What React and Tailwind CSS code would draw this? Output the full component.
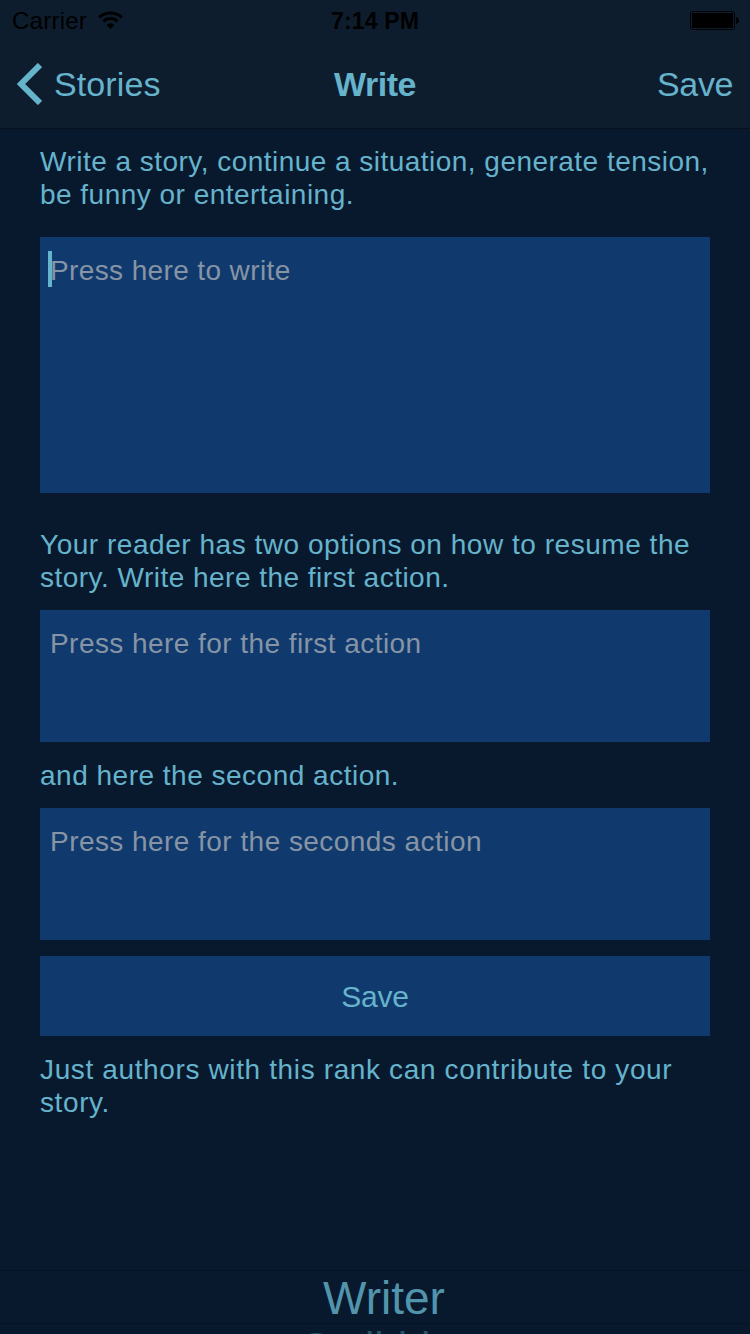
const copy = "w-max whitespace-nowrap text-[28px] leading-[33px]";

function Field({ text, height, spacing, cursor }) {
  return (
    <div className={`relative flex items-start bg-[#103a6d] pt-[17px] pl-[10px] ${height}`}>
      <div className={`${copy} ${spacing} text-[#8694a5]`}>{text}</div>
      {cursor && <div className="absolute top-[14px] left-2 h-9 w-1 bg-[#66b3cc]" />}
    </div>
  );
}

export default function App() {
  return (
    <div className="flex h-[1334px] w-[750px] flex-col overflow-hidden bg-[#08192e] font-['Liberation_Sans',Arial,sans-serif] text-[#66b3cc]">
      <header className="flex h-[129px] shrink-0 flex-col border-b border-[#06101e] bg-[#0e1d2e]">
        <div className="grid h-10 grid-cols-3 items-center text-black">
          <div className="flex items-center pl-3">
            <span className="w-[75px] pt-0.5 text-2xl leading-[38px] tracking-[0.25px]">Carrier</span>
            <svg className="ml-[11px]" width="25" height="19" viewBox="0 0 25 19">
              <path d="M1.2 6.3C7.5.4 17.5.4 23.8 6.3M5.4 10.4c4-3.8 10.2-3.8 14.2 0" fill="none" stroke="currentColor" strokeWidth="3" />
              <path d="M12.5 18 8.4 13.9c2.3-2.1 5.9-2.1 8.2 0z" fill="currentColor" />
            </svg>
          </div>
          <div className="pt-0.5 text-center text-[23px] leading-[38px] font-bold tracking-[0.15px] whitespace-nowrap">7:14 PM</div>
          <div className="flex justify-end pr-[11px]">
            <svg width="49" height="19" viewBox="0 0 49 19">
              <rect x=".5" y=".5" width="44" height="18" rx="2.5" fill="none" stroke="currentColor" />
              <rect x="2" y="2" width="41" height="15" rx="1" fill="currentColor" />
              <path d="M46 6c2 .5 3 1.5 3 3.5s-1 3-3 3.5z" fill="currentColor" />
            </svg>
          </div>
        </div>
        <div className="grid h-[88px] grid-cols-3 items-center text-[34px] leading-[40px]">
          <div className="flex items-center pl-4">
            <svg width="26" height="42" viewBox="0 0 26 42">
              <path d="M24 2 5 21l19 19" fill="none" stroke="currentColor" strokeWidth="6" />
            </svg>
            <span className="ml-3 tracking-[0.1px]">Stories</span>
          </div>
          <div className="text-center font-bold tracking-[-0.5px]">Write</div>
          <div className="pr-[17px] text-right tracking-[-0.4px]">Save</div>
        </div>
      </header>

      <main className="flex shrink-0 flex-col px-10">
        <div className={`${copy} mt-4`}>
          <p className="tracking-[0.47px]">Write a story, continue a situation, generate tension,</p>
          <p className="tracking-[0.48px]">be funny or entertaining.</p>
        </div>
        <div className="mt-[26px]">
          <Field text="Press here to write" height="h-[256px]" spacing="tracking-[0.38px]" cursor />
        </div>
        <div className={`${copy} mt-[35px]`}>
          <p className="tracking-[0.53px]">Your reader has two options on how to resume the</p>
          <p className="tracking-[0.48px]">story. Write here the first action.</p>
        </div>
        <div className="mt-4">
          <Field text="Press here for the first action" height="h-[132px]" spacing="tracking-[0.44px]" />
        </div>
        <p className={`${copy} mt-[17px] tracking-[0.5px]`}>and here the second action.</p>
        <div className="mt-4">
          <Field text="Press here for the seconds action" height="h-[132px]" spacing="tracking-[0.45px]" />
        </div>
        <button className="mt-4 h-20 bg-[#103a6d] text-[30px] tracking-[-0.2px]">Save</button>
        <div className={`${copy} mt-[17px]`}>
          <p className="tracking-[0.63px]">Just authors with this rank can contribute to your</p>
          <p className="tracking-[0.6px]">story.</p>
        </div>
      </main>

      <div className="mt-[151px] flex shrink-0 flex-col items-center border-t border-[#061323]">
        <div className="h-[52px] pl-[18px] text-[46px] leading-[55px] text-[#5294ab]">Writer</div>
        <div className="h-[53px] w-full border-t border-[#061323] pt-[2px] pl-[302px] text-[42px] leading-[44px] text-[#285368]">Scribbler</div>
      </div>
    </div>
  );
}
